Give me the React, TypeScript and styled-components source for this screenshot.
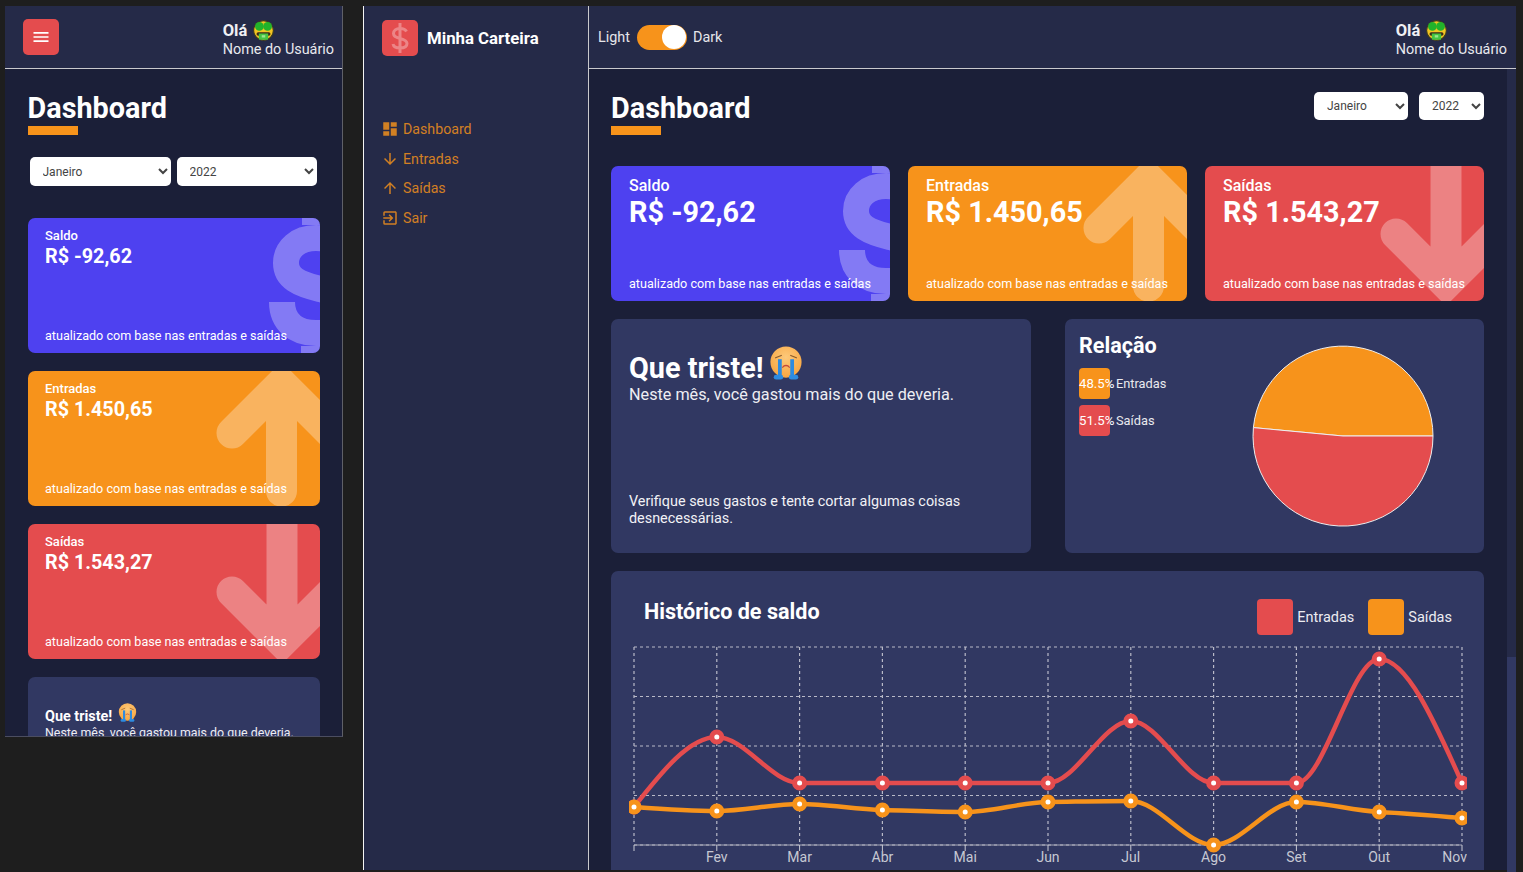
import React from "react";
import styled, {createGlobalStyle} from "styled-components";
import {MdArrowDownward, MdArrowUpward, MdDashboard, MdExitToApp, MdMenu} from "react-icons/md";

const GlobalStyle = createGlobalStyle`
    html, body {
        margin: 0;
        padding: 0;
        background: #1e1e1e;
        overflow: hidden;
    }
    * {
        box-sizing: border-box;
    }
    body, select {
        font-family: Roboto, "Liberation Sans", sans-serif;
    }
`;

const Page = styled.div`
    display: flex;
    gap: 20px;
    width: 1523px;
    height: 872px;
    padding: 6px 7px 2px 5px;
    background: #1e1e1e;
    overflow: hidden;
`;

const PhoneFrame = styled.div`
    display: flex;
    flex-direction: column;
    flex: none;
    width: 338px;
    height: 731px;
    background: #1b1f38;
    border-right: 1px solid #5f6068;
    border-bottom: 1px solid #4b4d60;
    overflow: hidden;
`;

const DesktopFrame = styled.div`
    display: flex;
    flex: 1;
    min-width: 0;
    border-left: 1px solid #f4f4f4;
`;

const Sidebar = styled.aside`
    flex: none;
    width: 225px;
    padding: 14px 18px;
    background: #252a48;
    border-right: 1px solid #c9c9cd;
`;

const Brand = styled.div`
    display: flex;
    align-items: center;
    gap: 9px;
    margin-bottom: 63px;
    color: #fff;
    font-size: 16.8px;
    font-weight: 700;
`;

const RedTile = styled.div`
    display: flex;
    align-items: center;
    justify-content: center;
    flex: none;
    width: 36px;
    height: 36px;
    border-radius: 5px;
    background: #e44c4e;
    color: #fff;
`;

const NavList = styled.nav`
    display: flex;
    flex-direction: column;
    gap: 9.7px;
    margin-left: -1px;
`;

const NavItem = styled.a`
    display: flex;
    align-items: center;
    gap: 4px;
    height: 20px;
    color: #f7931b;
    opacity: 0.82;
    font-size: 14.2px;
`;

const Column = styled.div`
    display: flex;
    flex-direction: column;
    flex: 1;
    min-width: 0;
`;

const Header = styled.header`
    display: flex;
    align-items: center;
    justify-content: space-between;
    flex: none;
    height: 63px;
    padding: 0 9px 0 18px;
    background: #252a48;
    border-bottom: 1px solid #c9c9cd;
`;

const PhoneHeader = styled(Header)`
    padding-right: 8px;
`;

const ToggleRow = styled.div`
    display: flex;
    align-items: center;
    gap: 7px;
    margin-left: -9px;
    color: #e6e6ea;
    font-size: 14.4px;
`;

const Toggle = styled.div`
    display: flex;
    justify-content: flex-end;
    align-items: center;
    width: 50px;
    height: 25px;
    margin-right: -1px;
    padding-right: 1px;
    border-radius: 13px;
    background: #f7931b;
`;

const ToggleKnob = styled.div`
    width: 24px;
    height: 24px;
    border-radius: 50%;
    background: #fff;
`;

const User = styled.div`
    padding-top: 5px;
    color: #e9e9ee;
    font-size: 14.4px;
    line-height: 18px;
`;

const Hello = styled.div`
    display: flex;
    align-items: center;
    gap: 6px;
    height: 21px;
    color: #f0f0f4;
    font-size: 16.5px;
    font-weight: 700;
`;

const BodyRow = styled.div`
    display: flex;
    flex: 1;
    min-height: 0;
`;

const Main = styled.main<{$compact?: boolean}>`
    flex: 1;
    min-width: 0;
    padding: ${p => (p.$compact ? "22px 22px 0 22.5px" : "22px 23px 0 22px")};
    background: #1b1f38;
    overflow: hidden;
`;

const ScrollTrack = styled.div`
    flex: none;
    width: 9px;
    padding-top: 588px;
    background: #252a48;
`;

const ScrollThumb = styled.div`
    height: 300px;
    background: #313862;
`;

const TitleBar = styled.div<{$compact?: boolean}>`
    display: flex;
    flex-direction: ${p => (p.$compact ? "column" : "row")};
    justify-content: ${p => (p.$compact ? "flex-start" : "space-between")};
    align-items: ${p => (p.$compact ? "stretch" : "flex-start")};
    height: ${p => (p.$compact ? "127px" : "75px")};
`;

const Heading = styled.h1`
    margin: 0;
    color: #fff;
    font-size: 28.8px;
    font-weight: 700;
    line-height: 35px;

    &::after {
        content: "";
        display: block;
        width: 50px;
        height: 9px;
        background: #f7931b;
    }
`;

const Filters = styled.div<{$compact?: boolean}>`
    display: flex;
    gap: ${p => (p.$compact ? "6px" : "11px")};
    margin-top: ${p => (p.$compact ? "22px" : "1px")};
    padding: ${p => (p.$compact ? "0 3px 0 2px" : "0")};
`;

const Select = styled.select<{$width: number}>`
    width: ${p => p.$width}px;
    height: ${p => p.$width > 100 ? 29 : 28}px;
    padding: 0 9px;
    border: none;
    border-radius: 5px;
    background: #fff;
    color: #444;
    font-size: 12px;
`;

const CardRow = styled.div<{$compact?: boolean}>`
    display: flex;
    flex-direction: ${p => (p.$compact ? "column" : "row")};
    gap: 18px;
`;

const Card = styled.section<{$color: string; $compact?: boolean}>`
    position: relative;
    display: flex;
    flex-direction: column;
    flex: ${p => (p.$compact ? "none" : "1")};
    height: 135px;
    padding: ${p => (p.$compact ? "10px 17.5px 9px" : "10px 18px 9px")};
    border-radius: 7px;
    background: ${p => p.$color};
    color: #fff;
    overflow: hidden;
`;

const CardArt = styled.svg`
    position: absolute;
    top: 0;
    right: 0;
    width: 279px;
    height: 135px;
`;

const CardLabel = styled.div<{$compact?: boolean}>`
    position: relative;
    font-size: ${p => (p.$compact ? "13px" : "16px")};
    font-weight: 500;
    line-height: ${p => (p.$compact ? "16px" : "19px")};
`;

const CardValue = styled.div<{$compact?: boolean}>`
    position: relative;
    font-size: ${p => (p.$compact ? "19.8px" : "28.8px")};
    font-weight: 700;
    line-height: ${p => (p.$compact ? "26px" : "34px")};
`;

const CardNote = styled.div`
    position: relative;
    margin-top: auto;
    font-size: 12.6px;
    line-height: 16px;
    white-space: nowrap;
`;

const Row = styled.div`
    display: flex;
    justify-content: space-between;
    margin-top: 18px;
`;

const Panel = styled.section<{$compact?: boolean}>`
    display: flex;
    flex-direction: column;
    width: ${p => (p.$compact ? "100%" : "420px")};
    height: 234px;
    border-radius: 7px;
    background: #313862;
    color: #fff;
`;

const MessagePanel = styled(Panel)<{$compact?: boolean}>`
    padding: ${p => (p.$compact ? "26px 17.5px 18px" : "27px 18px 26px")};
`;

const MessageTitle = styled.h2<{$compact?: boolean}>`
    display: flex;
    align-items: flex-end;
    gap: 6px;
    margin: 0;
    font-size: ${p => (p.$compact ? "14.4px" : "28.8px")};
    font-weight: 700;
    line-height: ${p => (p.$compact ? "16px" : "34px")};

    & > svg {
        margin-bottom: ${p => (p.$compact ? "3px" : "5px")};
    }
`;

const MessageText = styled.p<{$compact?: boolean}>`
    margin: 0;
    color: #eeeef3;
    font-size: ${p => (p.$compact ? "12.4px" : "16.2px")};
    line-height: ${p => (p.$compact ? "16px" : "19px")};
`;

const MessageFoot = styled.p`
    margin: auto 0 0;
    color: #f2f2f6;
    font-size: 14.4px;
    line-height: 17px;
`;

const RelationPanel = styled(Panel)`
    flex-direction: row;
    justify-content: space-between;
    width: 419px;
    padding: 14px 50px 0 14px;
`;

const RelationTitle = styled.h2`
    margin: 0 0 9px;
    font-size: 21.6px;
    font-weight: 700;
    line-height: 26px;
`;

const LegendList = styled.div`
    display: flex;
    flex-direction: column;
    gap: 6px;
`;

const LegendItem = styled.div`
    display: flex;
    align-items: center;
    gap: 6px;
    color: #e9e9ee;
    font-size: 12.8px;
`;

const LegendSwatch = styled.div<{$color: string}>`
    flex: none;
    width: 31px;
    height: 31px;
    border-radius: 4px;
    background: ${p => p.$color};
    color: #fff;
    font-size: 13.2px;
    line-height: 31px;
    white-space: nowrap;
`;

const PieSvg = styled.svg`
    margin-top: 12px;
`;

const HistoryPanel = styled.section`
    height: 320px;
    margin-top: 18px;
    border-radius: 7px;
    background: #313862;
    color: #fff;
`;

const HistoryHeader = styled.div`
    display: flex;
    justify-content: space-between;
    align-items: flex-start;
    padding: 28px 32px 0 33px;
`;

const HistoryTitle = styled.h2`
    margin: 0;
    font-size: 21.6px;
    font-weight: 700;
    line-height: 26px;
`;

const HistoryLegend = styled.div`
    display: flex;
    gap: 14px;
    color: #ececf1;
    font-size: 14.5px;
`;

const HistoryKey = styled.div`
    display: flex;
    align-items: center;
    gap: 4px;
`;

const HistorySwatch = styled.div<{$color: string}>`
    width: 36px;
    height: 36px;
    border-radius: 4px;
    background: ${p => p.$color};
`;

const ChartSvg = styled.svg`
    display: block;
    margin: 6px 0 0 18px;
    overflow: hidden;
`;

const TickLabel = styled.text<{$end?: boolean}>`
    fill: #c6c8d3;
    font-size: 14px;
    text-anchor: ${p => (p.$end ? "end" : "middle")};
`;

const months = ["Jan", "Fev", "Mar", "Abr", "Mai", "Jun", "Jul", "Ago", "Set", "Out", "Nov"];
const entradas = [807, 737, 783, 783, 783, 783, 721, 783, 783, 659, 783];
const saidas = [807, 811, 804, 810, 812, 802, 801, 845, 802, 812, 818];

const chartLeft = 634;
const chartTop = 641;
const stepX = 82.8;

function monotonePath(points: [number, number][]) {
    // same maths as a monotone-x curve
    const n = points.length;
    const delta: number[] = [];
    for (let i = 0; i < n - 1; i++) {
        delta.push((points[i + 1][1] - points[i][1]) / (points[i + 1][0] - points[i][0]));
    }
    const m: number[] = [delta[0]];
    for (let i = 1; i < n - 1; i++) {
        const a = delta[i - 1];
        const b = delta[i];
        const sign = (a < 0 ? -1 : 1) + (b < 0 ? -1 : 1);
        m.push(sign === 0 ? 0 : (sign / 2) * Math.min(Math.abs(a), Math.abs(b), Math.abs(a + b) / 4));
    }
    m[0] = (3 * delta[0] - m[1]) / 2;
    m.push((3 * delta[n - 2] - m[n - 2]) / 2);

    let d = `M${points[0][0]} ${points[0][1]}`;
    for (let i = 0; i < n - 1; i++) {
        const h = (points[i + 1][0] - points[i][0]) / 3;
        d += `C${points[i][0] + h} ${points[i][1] + h * m[i]} ${points[i + 1][0] - h} ${points[i + 1][1] - h * m[i + 1]} ${points[i + 1][0]} ${points[i + 1][1]}`;
    }
    return d;
}

function HistoryChart() {
    const xAt = (i: number) => chartLeft - 629 + i * stepX;
    const rows = [647, 696.5, 746, 795.5, 845].map(y => y - chartTop);
    const series = [
        {color: "#e44c4e", values: entradas},
        {color: "#f7931b", values: saidas},
    ];

    return (
        <ChartSvg width={838} height={236} viewBox="0 0 838 236">
            {rows.map(y => (
                <line key={y} x1={5} x2={833} y1={y} y2={y} stroke="#b9bac8" strokeWidth={1.2} strokeDasharray="3 3"/>
            ))}
            {months.map((m, i) => (
                <line key={m} x1={xAt(i)} x2={xAt(i)} y1={6} y2={204} stroke="#b9bac8" strokeWidth={1.2} strokeDasharray="3 3"/>
            ))}
            <line x1={5} x2={833} y1={204} y2={204} stroke="#a9aab8" strokeWidth={1}/>
            {months.map((m, i) => (
                <line key={m} x1={xAt(i)} x2={xAt(i)} y1={204} y2={210} stroke="#c9cad4" strokeWidth={1}/>
            ))}
            {series.map(s => {
                const pts = s.values.map((v, i) => [xAt(i), v - chartTop] as [number, number]);
                return (
                    <g key={s.color}>
                        <path d={monotonePath(pts)} fill="none" stroke={s.color} strokeWidth={4.5}/>
                        {pts.map(p => (
                            <circle key={p[0]} cx={p[0]} cy={p[1]} r={5} fill="#fff" stroke={s.color} strokeWidth={5}/>
                        ))}
                    </g>
                );
            })}
            {months.slice(1).map((m, i) => (
                i === 9
                    ? <TickLabel key={m} $end x={838} y={221}>{m}</TickLabel>
                    : <TickLabel key={m} x={xAt(i + 1)} y={221}>{m}</TickLabel>
            ))}
        </ChartSvg>
    );
}

function DollarArt() {
    return (
        <CardArt viewBox="0 0 279 135">
            <g fill="none" stroke="#fff" strokeOpacity={0.3} strokeWidth={26}>
                <path d="M312 34C300 25 288 20 275 20C257 20 245 31 245 45C245 60 258 66 279 71C300 76 312 82 312 94C312 108 298 115 275 115C254 115 241 103 241 84"/>
            </g>
            <rect x={261} y={0} width={18} height={7} fill="#fff" fillOpacity={0.3}/>
            <rect x={260} y={128} width={19} height={7} fill="#fff" fillOpacity={0.3}/>
        </CardArt>
    );
}

function ArrowArt({up}: {up: boolean}) {
    // arms and shaft share one shape so the overlap doesn't get darker
    const d = up
        ? "M191 62L240.5 12.5L290 62M240.5 12.5V120"
        : "M191 68L241 118L291 68M241 118V0";
    return (
        <CardArt viewBox="0 0 279 135">
            <path d={d} fill="none" stroke="#fff" strokeOpacity={0.3} strokeWidth={31} strokeLinecap="round" strokeLinejoin="miter"/>
        </CardArt>
    );
}

function LogoDollar() {
    return (
        <svg width={36} height={36} viewBox="0 0 36 36">
            <path
                d="M18 3V33M24.5 11.5C23.5 9.5 21 8.5 18 8.5C14 8.5 11.5 10.5 11.5 13.5C11.5 16.5 14 17.5 18 18.5C22 19.5 25 20.5 25 23.5C25 26.5 22 28 18 28C14 28 11.5 26.5 11 24"
                fill="none"
                stroke="#fff"
                strokeOpacity={0.32}
                strokeWidth={3}
            />
        </svg>
    );
}

function MoneyFace() {
    return (
        <svg width={21} height={21} viewBox="0 0 36 36">
            <circle cx={18} cy={18} r={17} fill="#f2c521" stroke="#3b3a22" strokeWidth={2}/>
            <circle cx={11} cy={11} r={7.5} fill="#22b32a"/>
            <circle cx={25} cy={11} r={7.5} fill="#22b32a"/>
            <rect x={6} y={21} width={24} height={6} rx={3} fill="#3b2a1a"/>
            <path d="M10 23h16v9a2 2 0 0 1-2 2H12a2 2 0 0 1-2-2z" fill="#45c443"/>
            <rect x={15} y={26} width={6} height={4} fill="#9de58f"/>
        </svg>
    );
}

function CryFace({size}: {size: number}) {
    return (
        <svg width={size} height={size} viewBox="0 0 36 36">
            <defs>
                <radialGradient id="cryFill" cx="50%" cy="35%" r="70%">
                    <stop offset="0%" stopColor="#fdc97a"/>
                    <stop offset="100%" stopColor="#f8a33c"/>
                </radialGradient>
            </defs>
            <circle cx={18} cy={17} r={16.5} fill="url(#cryFill)"/>
            <path d="M7 12.5l6-2.5M29 12.5l-6-2.5" stroke="#8a5a2a" strokeWidth={1.3} strokeLinecap="round"/>
            <path d="M14.5 22.5c1.5-2.5 5.5-2.5 7 0" fill="none" stroke="#c64a3c" strokeWidth={1.4} strokeLinecap="round"/>
            <rect x={9.5} y={14} width={4} height={19} fill="#2e8be0"/>
            <rect x={22.5} y={14} width={4} height={19} fill="#2e8be0"/>
            <rect x={5} y={30.5} width={10} height={5} rx={2.5} fill="#2e8be0"/>
            <rect x={21} y={30.5} width={10} height={5} rx={2.5} fill="#2e8be0"/>
        </svg>
    );
}

function Kpis({compact}: {compact?: boolean}) {
    const note = "atualizado com base nas entradas e saídas";
    const cards = [
        {label: "Saldo", value: "R$ -92,62", color: "#4e41f0", art: <DollarArt/>},
        {label: "Entradas", value: "R$ 1.450,65", color: "#f7931b", art: <ArrowArt up/>},
        {label: "Saídas", value: "R$ 1.543,27", color: "#e44c4e", art: <ArrowArt up={false}/>},
    ];

    return (
        <CardRow $compact={compact}>
            {cards.map(c => (
                <Card key={c.label} $color={c.color} $compact={compact}>
                    {c.art}
                    <CardLabel $compact={compact}>{c.label}</CardLabel>
                    <CardValue $compact={compact}>{c.value}</CardValue>
                    <CardNote>{note}</CardNote>
                </Card>
            ))}
        </CardRow>
    );
}

function DateFilters({compact}: {compact?: boolean}) {
    return (
        <Filters $compact={compact}>
            <Select $width={compact ? 141 : 94}><option>Janeiro</option></Select>
            <Select $width={compact ? 140 : 65}><option>2022</option></Select>
        </Filters>
    );
}

function UserBlock() {
    return (
        <User>
            <Hello>Olá <MoneyFace/></Hello>
            Nome do Usuário
        </User>
    );
}

export default function App() {
    return (
        <>
            <GlobalStyle/>
            <Page>
                <PhoneFrame>
                    <PhoneHeader>
                        <RedTile><MdMenu size={20}/></RedTile>
                        <UserBlock/>
                    </PhoneHeader>
                    <Main $compact>
                        <TitleBar $compact>
                            <Heading>Dashboard</Heading>
                            <DateFilters compact/>
                        </TitleBar>
                        <Kpis compact/>
                        <Row>
                            <MessagePanel $compact>
                                <MessageTitle $compact>Que triste! <CryFace size={19}/></MessageTitle>
                                <MessageText $compact>Neste mês, você gastou mais do que deveria.</MessageText>
                            </MessagePanel>
                        </Row>
                    </Main>
                </PhoneFrame>

                <DesktopFrame>
                    <Sidebar>
                        <Brand>
                            <RedTile><LogoDollar/></RedTile>
                            Minha Carteira
                        </Brand>
                        <NavList>
                            <NavItem><MdDashboard size={18}/>Dashboard</NavItem>
                            <NavItem><MdArrowDownward size={18}/>Entradas</NavItem>
                            <NavItem><MdArrowUpward size={18}/>Saídas</NavItem>
                            <NavItem><MdExitToApp size={18}/>Sair</NavItem>
                        </NavList>
                    </Sidebar>
                    <Column>
                        <Header>
                            <ToggleRow>
                                Light
                                <Toggle><ToggleKnob/></Toggle>
                                Dark
                            </ToggleRow>
                            <UserBlock/>
                        </Header>
                        <BodyRow>
                            <Main>
                                <TitleBar>
                                    <Heading>Dashboard</Heading>
                                    <DateFilters/>
                                </TitleBar>
                                <Kpis/>
                                <Row>
                                    <MessagePanel>
                                        <MessageTitle>Que triste! <CryFace size={34}/></MessageTitle>
                                        <MessageText>Neste mês, você gastou mais do que deveria.</MessageText>
                                        <MessageFoot>Verifique seus gastos e tente cortar algumas coisas desnecessárias.</MessageFoot>
                                    </MessagePanel>
                                    <RelationPanel>
                                        <div>
                                            <RelationTitle>Relação</RelationTitle>
                                            <LegendList>
                                                <LegendItem><LegendSwatch $color="#f7931b">48.5%</LegendSwatch>Entradas</LegendItem>
                                                <LegendItem><LegendSwatch $color="#e44c4e">51.5%</LegendSwatch>Saídas</LegendItem>
                                            </LegendList>
                                        </div>
                                        <PieSvg width={182} height={182} viewBox="-91 -91 182 182">
                                            <path d="M0 0L90 0A90 90 0 0 0 -89.6 -8.4Z" fill="#f7931b" stroke="#eee" strokeWidth={1}/>
                                            <path d="M0 0L-89.6 -8.4A90 90 0 1 0 90 0Z" fill="#e44c4e" stroke="#eee" strokeWidth={1}/>
                                        </PieSvg>
                                    </RelationPanel>
                                </Row>
                                <HistoryPanel>
                                    <HistoryHeader>
                                        <HistoryTitle>Histórico de saldo</HistoryTitle>
                                        <HistoryLegend>
                                            <HistoryKey><HistorySwatch $color="#e44c4e"/>Entradas</HistoryKey>
                                            <HistoryKey><HistorySwatch $color="#f7931b"/>Saídas</HistoryKey>
                                        </HistoryLegend>
                                    </HistoryHeader>
                                    <HistoryChart/>
                                </HistoryPanel>
                            </Main>
                            <ScrollTrack><ScrollThumb/></ScrollTrack>
                        </BodyRow>
                    </Column>
                </DesktopFrame>
            </Page>
        </>
    );
}
